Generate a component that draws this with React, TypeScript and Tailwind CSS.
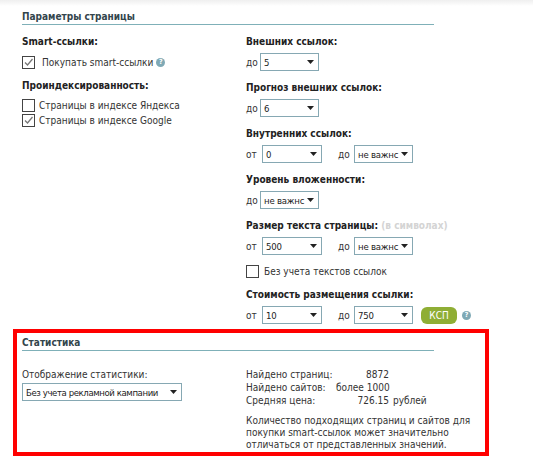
import React from 'react';

const Select = ({ value, className }: { value: string; className: string }) => (
  <div className={`flex h-[18px] items-center justify-between border border-[#86a8b3] bg-white pl-[3px] pr-[4px] text-[9.5px] text-[#222] ${className}`}>
    <span className="whitespace-nowrap">{value}</span>
    <svg width="7" height="4" viewBox="0 0 7 4" className="ml-[2px] shrink-0">
      <path d="M0 0h7L3.5 4z" fill="#222" />
    </svg>
  </div>
);

const Check = ({ checked }: { checked?: boolean }) => (
  <span className="flex h-[13px] w-[13px] shrink-0 items-center justify-center border border-[#444] bg-white">
    {checked && (
      <svg width="11" height="11" viewBox="0 0 11 11">
        <path d="M2 5.5l2.5 2.5L9.5 2" fill="none" stroke="#777" strokeWidth="1.3" />
      </svg>
    )}
  </span>
);

const Help = () => (
  <span className="flex h-[9px] w-[9px] items-center justify-center rounded-full bg-[#7fa9b5] text-[7px] font-bold leading-none text-white">?</span>
);

const Heading = ({ children }: { children: React.ReactNode }) => (
  <div className="h-[18px] w-[412px] border-b border-[#7fb0b8] font-bold leading-[20px] text-[#33454c]">{children}</div>
);

const Label = ({ children }: { children: React.ReactNode }) => (
  <div className="h-[14px] font-bold leading-[14px] text-[#222]">{children}</div>
);

const FromTo = ({ from, to }: { from: string; to: string }) => (
  <div className="mt-[4px] flex h-[18px] items-center">
    <span className="w-[16px]">от</span>
    <Select value={from} className="w-[60px] tracking-[-0.2px]" />
    <span className="ml-[16px] w-[16px]">до</span>
    <Select value={to} className="w-[59px] tracking-[-0.2px]" />
  </div>
);

const UpTo = ({ value }: { value: string }) => (
  <div className="mt-[4px] flex h-[18px] items-center">
    <span className="w-[14px]">до</span>
    <Select value={value} className="w-[59px] tracking-[-0.2px]" />
  </div>
);

export default function App() {
  return (
    <div className="h-[458px] overflow-hidden bg-gradient-to-b from-[#efefef] to-white to-[6px] font-['DejaVu_Sans_Condensed','Noto_Sans',sans-serif] text-[10px] leading-[13px] text-[#333]">
      <div className="pl-[22px] pt-[7px]">
        <Heading>Параметры страницы</Heading>
        <div className="flex">
          <div className="w-[224px] pt-[10px]">
            <Label>Smart-ссылки:</Label>
            <div className="mt-[6px] flex h-[14px] items-center">
              <Check checked />
              <span className="ml-[7px]">Покупать smart-ссылки</span>
              <span className="ml-[3px]"><Help /></span>
            </div>
            <div className="mt-[10px]"><Label>Проиндексированность:</Label></div>
            <div className="mt-[5px] flex h-[14px] items-center gap-[4px]">
              <Check />
              <span>Страницы в индексе Яндекса</span>
            </div>
            <div className="mt-[1px] flex h-[14px] items-center gap-[4px]">
              <Check checked />
              <span>Страницы в индексе Google</span>
            </div>
          </div>
          <div className="pt-[10px]">
            <Label>Внешних ссылок:</Label>
            <UpTo value="5" />
            <div className="mt-[10px]"><Label>Прогноз внешних ссылок:</Label></div>
            <UpTo value="6" />
            <div className="mt-[10px]"><Label>Внутренних ссылок:</Label></div>
            <FromTo from="0" to="не важнс" />
            <div className="mt-[10px]"><Label>Уровень вложенности:</Label></div>
            <UpTo value="не важнс" />
            <div className="mt-[10px]">
              <Label>
                Размер текста страницы: <span className="text-[#d4d4d4]">(в символах)</span>
              </Label>
            </div>
            <FromTo from="500" to="не важнс" />
            <div className="mt-[10px] flex h-[13px] items-center gap-[5px]">
              <Check />
              <span>Без учета текстов ссылок</span>
            </div>
            <div className="mt-[10px]"><Label>Стоимость размещения ссылки:</Label></div>
            <div className="mt-[4px] flex h-[18px] items-center">
              <span className="w-[16px]">от</span>
              <Select value="10" className="w-[60px] tracking-[-0.2px]" />
              <span className="ml-[16px] w-[16px]">до</span>
              <Select value="750" className="w-[59px] tracking-[-0.2px]" />
              <span className="ml-[8px] mt-[1px] flex h-[17px] w-[36px] items-center justify-center rounded-[6px] bg-[#8fae35] text-white">КСП</span>
              <span className="ml-[5px]"><Help /></span>
            </div>
          </div>
        </div>
      </div>

      <div className="ml-[13px] mt-[5px] h-[127px] w-[476px] border-[4px] border-[#ff0000] pl-[5px]">
        <Heading>Статистика</Heading>
        <div className="flex">
          <div className="w-[224px] pt-[17px]">
            <div>Отображение статистики:</div>
            <Select value="Без учета рекламной кампании" className="mt-[2px] w-[160px] tracking-[-0.4px]" />
          </div>
          <div className="pt-[17px]">
            <div className="grid grid-cols-[90px_53px_auto] whitespace-nowrap">
              <span>Найдено страниц:</span><span className="text-right">8872</span><span />
              <span>Найдено сайтов:</span><span className="text-right">более 1000</span><span />
              <span>Средняя цена:</span><span className="text-right">726.15</span><span className="ml-[4px]">рублей</span>
            </div>
            <p className="mt-[8px] w-[232px] leading-[12px]">
              Количество подходящих страниц и сайтов для покупки smart-ссылок может значительно отличаться от представленных значений.
            </p>
          </div>
        </div>
      </div>
    </div>
  );
}
